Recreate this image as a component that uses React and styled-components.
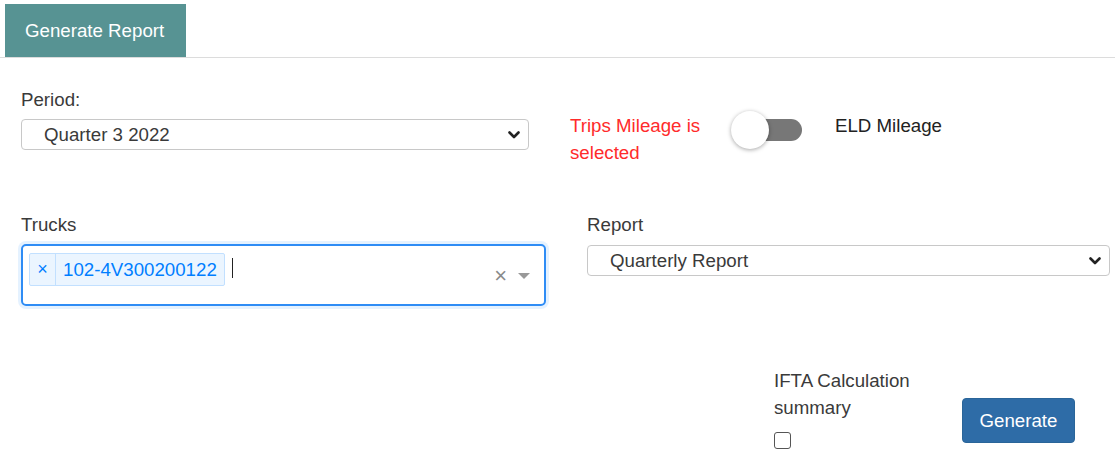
import React from 'react'
import styled, { createGlobalStyle } from 'styled-components'

const GlobalStyle = createGlobalStyle`
  body {
    margin: 0;
    padding: 0;
    background: #fff;
    font-family: "Liberation Sans", Arial, sans-serif;
    color: #333;
  }
  * { box-sizing: border-box; }
`

const Page = styled.div`
  width: 1115px;
  height: 465px;
  padding-top: 4px;
  overflow: hidden;
`

const TabBar = styled.div`
  display: flex;
  padding-left: 5px;
  border-bottom: 1px solid #dcdcdc;
`

const Tab = styled.div`
  width: 181px;
  height: 53px;
  line-height: 53px;
  padding: 0 0 0 20px;
  background: #579393;
  color: #fff;
  font-size: 18.7px;
`

const Form = styled.div`
  padding: 0 5px 0 21px;
`

const Row = styled.div`
  display: flex;
  align-items: flex-start;
  margin-top: ${p => p.top}px;
`

const Field = styled.div`
  display: flex;
  flex-direction: column;
  width: ${p => p.width}px;
  margin-left: ${p => p.left || 0}px;
`

const Label = styled.div`
  font-size: 18.7px;
  line-height: 27px;
  color: #3a3a3a;
  margin-bottom: ${p => p.gap || 6.5}px;
`

const SelectBox = styled.div`
  height: 31px;
  border: 1px solid #c8c8c8;
  border-radius: 4px;
  display: flex;
  align-items: center;
  justify-content: space-between;
  padding: 0 8px 0 22px;
  font-size: 18.7px;
  color: #3a3a3a;
  background: #fff;
`

const Chevron = () => (
  <svg width="12" height="8" viewBox="0 0 12 8">
    <polyline points="1.5,1.5 6,6 10.5,1.5" fill="none" stroke="#222" strokeWidth="2.6" strokeLinecap="round" strokeLinejoin="round" />
  </svg>
)

const ToggleGroup = styled.div`
  display: flex;
  align-items: flex-start;
  margin-left: 41px;
  margin-top: 26px;
`

const Warning = styled.div`
  width: 150px;
  font-size: 18.7px;
  line-height: 27px;
  color: #ff2b2b;
`

const Switch = styled.div`
  position: relative;
  width: 72px;
  height: 40px;
  margin-left: 10px;
  margin-top: -0.5px;
`

const Track = styled.div`
  position: absolute;
  left: 5px;
  top: 8px;
  width: 67px;
  height: 22px;
  border-radius: 11px;
  background: #777;
`

const Knob = styled.div`
  position: absolute;
  left: 1px;
  top: 0;
  width: 38px;
  height: 38px;
  border-radius: 50%;
  background: #fff;
  box-shadow: 0 1px 4px rgba(0, 0, 0, 0.35);
`

const SideText = styled.div`
  margin-left: 33px;
  font-size: 18.7px;
  line-height: 27px;
  color: #222;
`

const Multi = styled.div`
  height: 62px;
  border: 2px solid #2e8cf5;
  border-radius: 5px;
  box-shadow: 0 0 0 3px rgba(0, 126, 255, 0.1);
  display: flex;
  align-items: flex-start;
  padding: 7px 14px 0 6px;
`

const TagItem = styled.div`
  display: flex;
  height: 33px;
  background: #ebf5ff;
  border: 1px solid #c2e0ff;
  border-radius: 2px;
  color: #007eff;
  font-size: 18.7px;
`

const TagRemove = styled.span`
  width: 26px;
  display: flex;
  align-items: center;
  justify-content: center;
  border-right: 1px solid #c2e0ff;
  font-size: 18px;
`

const TagLabel = styled.span`
  display: flex;
  align-items: center;
  padding: 0 7px;
`

const Caret = styled.div`
  width: 1px;
  height: 20px;
  background: #222;
  margin: 5px 0 0 7px;
`

const Controls = styled.div`
  margin-left: auto;
  display: flex;
  align-items: center;
  height: 45px;
  gap: 11px;
`

const Clear = styled.span`
  color: #8a8a8a;
  font-size: 22px;
  line-height: 1;
`

const Arrow = styled.span`
  width: 0;
  height: 0;
  border-style: solid;
  border-width: 6px 6px 3px;
  border-color: #999 transparent transparent;
  margin-top: 4px;
`

const Bottom = styled.div`
  display: flex;
  align-items: flex-start;
  padding-left: 753px;
  margin-top: 60.5px;
`

const Option = styled.div`
  width: 150px;
  display: flex;
  flex-direction: column;
  font-size: 18.7px;
  line-height: 27px;
  color: #3a3a3a;
`

const Check = styled.div`
  width: 17px;
  height: 17px;
  border: 1.5px solid #555;
  border-radius: 3px;
  margin-top: 11.5px;
  background: #fff;
`

const Button = styled.button`
  margin-left: 38px;
  margin-top: 31.5px;
  width: 113px;
  height: 45px;
  border: 1px solid #2a6599;
  border-radius: 4px;
  background: #2e6ca7;
  color: #fff;
  font-family: "Liberation Sans", Arial, sans-serif;
  font-size: 18.7px;
  padding: 0;
`

export default function App() {
  return (
    <Page>
      <GlobalStyle />
      <TabBar>
        <Tab>Generate Report</Tab>
      </TabBar>
      <Form>
        <Row top={27.5}>
          <Field width={508}>
            <Label>Period:</Label>
            <SelectBox>
              <span>Quarter 3 2022</span>
              <Chevron />
            </SelectBox>
          </Field>
          <ToggleGroup>
            <Warning>Trips Mileage is selected</Warning>
            <Switch>
              <Track />
              <Knob />
            </Switch>
            <SideText>ELD Mileage</SideText>
          </ToggleGroup>
        </Row>
        <Row top={45}>
          <Field width={525}>
            <Label>Trucks</Label>
            <Multi>
              <TagItem>
                <TagRemove>×</TagRemove>
                <TagLabel>102-4V300200122</TagLabel>
              </TagItem>
              <Caret />
              <Controls>
                <Clear>×</Clear>
                <Arrow />
              </Controls>
            </Multi>
          </Field>
          <Field width={523} left={41}>
            <Label gap={7.5}>Report</Label>
            <SelectBox>
              <span>Quarterly Report</span>
              <Chevron />
            </SelectBox>
          </Field>
        </Row>
        <Bottom>
          <Option>
            <span>IFTA Calculation summary</span>
            <Check />
          </Option>
          <Button>Generate</Button>
        </Bottom>
      </Form>
    </Page>
  )
}
